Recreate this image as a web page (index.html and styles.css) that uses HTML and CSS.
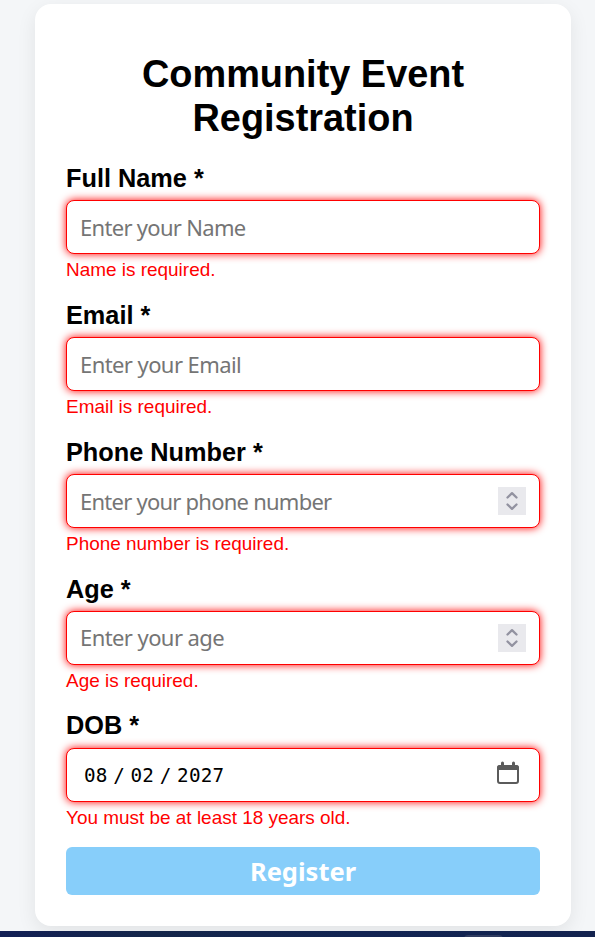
FILE: index.html
```html
<!DOCTYPE html>
<html lang="en">
<head>
<meta charset="utf-8">
<title>Community Event Registration</title>
<link rel="stylesheet" href="styles.css">
</head>
<body>
<main class="page">
  <form class="card">
    <h1 class="title">Community Event Registration</h1>
    <div class="field">
      <label class="label">Full Name *</label>
      <div class="input"><span class="placeholder name">Enter your Name</span></div>
      <p class="error">Name is required.</p>
    </div>
    <div class="field">
      <label class="label">Email *</label>
      <div class="input"><span class="placeholder email">Enter your Email</span></div>
      <p class="error">Email is required.</p>
    </div>
    <div class="field">
      <label class="label">Phone Number *</label>
      <div class="input"><span class="placeholder phone">Enter your phone number</span>
        <svg class="spinner" viewBox="0 0 28 28"><path d="M9.5 10.5 14 6.2l4.5 4.3M9.5 17.5l4.5 4.3 4.5-4.3"/></svg>
      </div>
      <p class="error">Phone number is required.</p>
    </div>
    <div class="field">
      <label class="label">Age *</label>
      <div class="input"><span class="placeholder age">Enter your age</span>
        <svg class="spinner" viewBox="0 0 28 28"><path d="M9.5 10.5 14 6.2l4.5 4.3M9.5 17.5l4.5 4.3 4.5-4.3"/></svg>
      </div>
      <p class="error">Age is required.</p>
    </div>
    <div class="field">
      <label class="label">DOB *</label>
      <div class="input"><span class="date"><span>08</span><span class="slash">/</span><span>02</span><span class="slash">/</span><span>2027</span></span>
        <svg class="calendar" viewBox="0 0 22 22"><path class="frame" d="M3 4h16a2 2 0 0 1 2 2v13a2 2 0 0 1-2 2H3a2 2 0 0 1-2-2V6a2 2 0 0 1 2-2z"/><path class="solid" d="M0 8V6a3 3 0 0 1 3-3h1V1a1 1 0 0 1 3 0v2h8V1a1 1 0 0 1 3 0v2h1a3 3 0 0 1 3 3v2z"/></svg>
      </div>
      <p class="error">You must be at least 18 years old.</p>
    </div>
    <button class="submit" type="button">Register</button>
  </form>
</main>
<footer class="taskbar"><span class="tab"></span></footer>
</body>
</html>
```
FILE: styles.css
```css
* { box-sizing: border-box; }
body {
  margin: 0;
  height: 937px;
  overflow: hidden;
  background: #f4f6f8;
  font-family: "Liberation Sans", Arial, sans-serif;
  color: #000;
}
.page { height: 931px; padding: 4px 24px 0 35px; overflow: hidden; }
.card {
  height: 922px;
  padding: 48px 31px 0;
  background: #fff;
  border-radius: 16px;
  box-shadow: 0 6px 19px rgba(0, 0, 0, .08);
}
.title {
  margin: 0 0 21.5px;
  font-size: 37.9px;
  line-height: 44px;
  text-align: center;
}
.field { height: 136.9px; }
.label {
  display: block;
  height: 38.5px;
  padding-top: 2.4px;
  font-size: 25.3px;
  font-weight: 700;
  line-height: 29px;
}
.input {
  display: flex;
  align-items: center;
  justify-content: space-between;
  height: 54px;
  padding: 0 13px;
  border: 1px solid #f00;
  border-radius: 8px;
  background: #fff;
  box-shadow: 0 0 8px #f00;
}
.placeholder {
  font: 22px/30px "Noto Sans", Tahoma, sans-serif;
  letter-spacing: -.7px;
  color: #757575;
  white-space: nowrap;
}
.email, .age { letter-spacing: -.58px; }
.phone { letter-spacing: -.76px; }
.age { margin-top: -1px; }
.error {
  margin: 5.4px 0 0;
  font-size: 18.95px;
  line-height: 22px;
  color: #f00;
}
.spinner { width: 28px; height: 28px; background: #e9e9ed; }
.spinner path { fill: none; stroke: #9292a0; stroke-width: 2.3; stroke-linecap: round; stroke-linejoin: round; }
.date {
  display: flex;
  padding-left: 4px;
  font: 19.3px/26px "DejaVu Sans Mono", monospace;
  letter-spacing: .25px;
  position: relative;
  top: 1px;
}
.slash { width: 22.8px; text-align: center; }
.calendar { width: 22px; height: 22px; margin: 0 7px 3px 0; overflow: visible; }
.frame { fill: none; stroke: #5b5b5b; stroke-width: 2; }
.solid { fill: #5b5b5b; }
.submit {
  display: block;
  width: 100%;
  height: 48px;
  margin-top: 1px;
  padding: 0;
  border: 0;
  border-radius: 6px;
  background: #87cefa;
  color: #fff;
  font: 700 25.5px/48px "Noto Sans", Tahoma, sans-serif;
}
.taskbar { height: 6px; background: linear-gradient(90deg, #121f55, #14264a 25%, #122453 60%, #13234f); overflow: hidden; }
.tab {
  display: block;
  width: 39px;
  height: 10px;
  margin: 4px 0 0 464px;
  border-radius: 4px;
  background: #303c61;
}
```
